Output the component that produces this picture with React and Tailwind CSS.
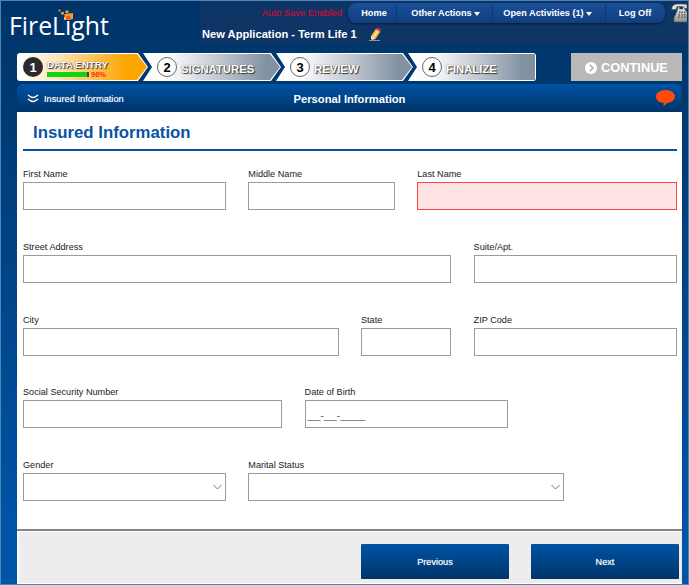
import React from "react";

const SPANS = {
  2: "col-span-2",
  3: "col-span-3",
  4: "col-span-4",
  5: "col-span-5",
  6: "col-span-6",
  8: "col-span-8",
};

const rows = [
  [
    { label: "First Name", span: 4 },
    { label: "Middle Name", span: 3 },
    { label: "Last Name", span: 5, error: true },
  ],
  [
    { label: "Street Address", span: 8 },
    { label: "Suite/Apt.", span: 4 },
  ],
  [
    { label: "City", span: 6 },
    { label: "State", span: 2 },
    { label: "ZIP Code", span: 4 },
  ],
  [
    { label: "Social Security Number", span: 5 },
    { label: "Date of Birth", span: 4, mask: "__-__-____" },
  ],
  [
    { label: "Gender", span: 4, select: true },
    { label: "Marital Status", span: 6, select: true },
  ],
];

function Field({ label, span, error, mask, select }) {
  return (
    <div className={SPANS[span]}>
      <div className="mb-px h-[13px] text-[9.15px] leading-[13px] whitespace-nowrap text-[#222]">{label}</div>
      <div
        className={
          "flex h-[28px] items-center border " +
          (error ? "border-[#ff4446] bg-[#ffe4e4]" : "border-[#9b9b9b] bg-white")
        }
      >
        {mask && <span className="pt-[2px] pl-[2px] text-[11.3px] leading-none text-[#666]">{mask}</span>}
        {select && (
          <svg className="mr-[3px] ml-auto" width="9" height="6" viewBox="0 0 9 6" fill="none" stroke="#777" strokeWidth="1">
            <path d="M.5 1l4 4 4-4" />
          </svg>
        )}
      </div>
    </div>
  );
}

const first = "[clip-path:polygon(0_0,calc(100%_-_10px)_0,100%_50%,calc(100%_-_10px)_100%,0_100%)]";
const middle = "[clip-path:polygon(0_0,calc(100%_-_10px)_0,100%_50%,calc(100%_-_10px)_100%,0_100%,9px_50%)]";
const last = "[clip-path:polygon(0_0,100%_0,100%_100%,0_100%,9px_50%)]";

function Step({ n, title, size, shape, fill, active, children }) {
  return (
    <div className={`${size} ${shape} h-[28px] shrink-0 bg-white p-px`}>
      <div className={`${shape} ${fill} flex h-full items-center`}>
        <span
          className={
            "flex size-[20px] shrink-0 items-center justify-center rounded-full text-[13px] leading-none font-bold " +
            (active ? "ml-[5px] bg-[#2b2b2b] text-white" : "ml-[13px] border border-[#666] bg-white text-black")
          }
        >
          {n}
        </span>
        <div className={active ? "ml-[4px] pt-[3px]" : "ml-[4px] pt-[5px]"}>
          <div
            className={
              "font-bold whitespace-nowrap text-white [text-shadow:1px_1px_1px_#333,0_0_1px_#555] " +
              (active ? "text-[9.8px] leading-[11px]" : "text-[11.3px] leading-[13px]")
            }
          >
            {title}
          </div>
          {children}
        </div>
      </div>
    </div>
  );
}

const silver = "bg-[linear-gradient(90deg,#fff_0%,#f8f9fa_20%,#c2c8d1_55%,#8291a2_90%,#8291a2_100%)]";

function Caret() {
  return (
    <svg className="ml-[2px] inline-block" width="6" height="4" viewBox="0 0 6 4">
      <path d="M0 0h6L3 4z" fill="#fff" />
    </svg>
  );
}

function NavItem({ size, children }) {
  return (
    <div className={`${size} flex shrink-0 items-center justify-center border-r border-[#0e3a75] whitespace-nowrap last:border-r-0`}>
      {children}
    </div>
  );
}

function Logo() {
  return (
    <div className="relative h-[44px] w-[183px] shrink-0">
      <div className="pt-[7px] pl-[8px] font-['Open_Sans',sans-serif] text-[24.8px] leading-[34px] font-normal text-white">
        FireLight
      </div>
      <svg className="absolute top-[8px] left-[56px]" width="18" height="13" viewBox="0 0 18 13">
        <path d="M7.500 5l8.500-1v6l-4 1H7.500z" fill="#f9992a" />
        <path d="M9 7.500l4-1 .5 3.500-4 1z" fill="#e8562a" />
        <path d="M7 8h2v3H7z" fill="#fbb65a" />
        <path d="M8.500 1.500h3v2.500h-3z" fill="#f6a53c" />
        <path d="M4 3h3v2.500H4z" fill="#e39a44" />
        <path d="M1.500 .5h2v2h-2z" fill="#cf9650" />
      </svg>
    </div>
  );
}

function Pencil() {
  return (
    <svg className="ml-[12px]" width="14" height="15" viewBox="0 0 14 15">
      <path d="M0 13.500h11" stroke="#8794a8" />
      <path d="M2 9l5-7.500 4.500 3-5 7.500-4.500 1z" fill="#f5b338" />
      <path d="M4.200 10.500L9 3.500" stroke="#ffe9a8" strokeWidth="1.500" />
      <path d="M7 2l1-1.500 4 1.500-1 3z" fill="#c8323b" />
      <path d="M2 9l4 3-4 1z" fill="#f4e3c1" />
      <path d="M1.500 11.500l1.500 1.200-1.500.3z" fill="#222" />
    </svg>
  );
}

function Phone() {
  return (
    <svg className="ml-[6px] shrink-0" width="16" height="20" viewBox="0 0 16 20">
      <defs>
        <linearGradient id="phone-body" x1="0" y1="0" x2="0" y2="1">
          <stop offset="0" stopColor="#eee" />
          <stop offset="1" stopColor="#8d8d8d" />
        </linearGradient>
      </defs>
      <path d="M1 6.500C0 3 3 1 8 1s8 .5 8 .5v4h-3l-1-2H6l-1 3z" fill="#e2e2e2" stroke="#555" strokeWidth=".6" />
      <path d="M7 4h1.500v2H12V4h1.500v2L16 9v10H3v-4l3.500-8z" fill="url(#phone-body)" stroke="#555" strokeWidth=".5" />
      <path d="M8 8.500h1.500V10H8zM10.500 8.500H12V10h-1.500zM13 8.500h1.500V10H13zM7.500 11H9v1.500H7.500zM10.500 11H12v1.500h-1.500zM13 11h1.500v1.500H13zM7 13.500h1.500V15H7zM10.500 13.500H12V15h-1.500zM13 13.500h1.500V15H13z" fill="#555" />
    </svg>
  );
}

export default function App() {
  return (
    <div className="flex h-[585px] w-[689px] flex-col overflow-hidden border border-[#4b86b8] bg-[linear-gradient(180deg,#003468_0px,#003a73_110px,#0055a9_550px)] font-['Liberation_Sans',Arial,sans-serif]">
      <header className="flex h-[43px] shrink-0">
        <Logo />
        <div className="ml-[16px] flex min-w-0 flex-1 flex-col bg-[#0e3566]">
          <div className="flex h-[23px] pt-[2px]">
            <div className="ml-[62px] w-[86px] shrink-0 text-[9.35px] leading-[21px] whitespace-nowrap text-[#e4002b]">
              Auto Save Enabled
            </div>
            <nav className="flex h-[20px] w-[317px] shrink-0 rounded-[8px] bg-[linear-gradient(180deg,#1a4f98,#103f80)] pt-px text-[9.2px] font-bold text-white shadow-[0_1px_2px_#0008]">
              <NavItem size="w-[49px] pl-[4px]">Home</NavItem>
              <NavItem size="w-[96px] pl-[2px]">Other Actions<Caret /></NavItem>
              <NavItem size="w-[113px] pr-[3px]">Open Activities (1)<Caret /></NavItem>
              <NavItem size="w-[59px] pr-[1px]">Log Off</NavItem>
            </nav>
            <Phone />
          </div>
          <div className="flex h-[20px] items-center pl-[2px] text-[11.15px] font-bold whitespace-nowrap text-white">
            <span>New Application - Term Life 1</span>
            <Pencil />
          </div>
        </div>
      </header>

      <div className="mt-[9px] mr-[6px] ml-[16px] flex h-[28px] shrink-0 justify-between">
        <div className="flex overflow-hidden rounded-[3px]">
          <Step n="1" title="DATA ENTRY" size="w-[131px]" shape={first} active fill="bg-[linear-gradient(90deg,#fff_0%,#fde5bd_30%,#fdb52f_70%,#fda500_85%)]">
            <div className="flex h-[9px] items-center">
              <div className="flex h-[5px] w-[42px] justify-end bg-[#12d312]">
                <div className="w-[2px] bg-[#444]" />
              </div>
              <span className="ml-[2px] text-[7.5px] leading-[9px] font-bold text-[#ff2a00]">96%</span>
            </div>
          </Step>
          <Step n="2" title="SIGNATURES" size="-ml-[5px] w-[138px]" shape={middle} fill={silver} />
          <Step n="3" title="REVIEW" size="-ml-[5px] w-[137px]" shape={middle} fill={silver} />
          <Step n="4" title="FINALIZE" size="-ml-[5px] w-[128px]" shape={last} fill={silver} />
        </div>
        <button className="flex w-[111px] items-center justify-center gap-[4px] bg-[#b9b9b9] pt-[1px] text-[12.8px] font-bold text-white">
          <svg width="12" height="12" viewBox="0 0 12 12">
            <circle cx="6" cy="6" r="6" fill="#fff" />
            <path d="M4.700 2.800L8 6 4.700 9.200" fill="none" stroke="#b0b0b0" strokeWidth="1.600" />
          </svg>
          CONTINUE
        </button>
      </div>

      <main className="mt-[3px] mr-[6px] ml-[16px] flex min-h-0 flex-1 flex-col">
        <div className="grid h-[28px] shrink-0 grid-cols-[1fr_auto_1fr] items-center rounded-t-[6px] bg-[linear-gradient(180deg,#0053a6,#003468)] text-white">
          <div className="flex items-center gap-[5px] pt-[4px] pl-[10px] text-[9.25px] [text-shadow:0_0_1px_#fff8]">
            <svg className="-mt-[3px]" width="12" height="9" viewBox="0 0 12 9" fill="none" stroke="#fff" strokeWidth="1.600">
              <path d="M1 1q3 2.500 5 2.500t5-2.500M1 5q3 2.500 5 2.500t5-2.500" />
            </svg>
            Insured Information
          </div>
          <h1 className="pt-[2px] text-[11.2px] font-bold">Personal Information</h1>
          <svg className="mr-[6px] ml-auto" width="21" height="18" viewBox="0 0 21 18">
            <path d="M10.500 1C16 1 20 4 20 7.500S16.500 13.500 12 14q-1 2-4 3 1-1.500.8-3C4 13.500 1 11 1 7.500S5 1 10.500 1z" fill="#ff4a0a" />
          </svg>
        </div>
        <section className="h-[417px] shrink-0 bg-white pr-[5.5px] pl-[6px]">
          <h2 className="h-[39px] border-b-2 border-[#0853a5] pl-[10px] text-[16.8px] leading-[41px] font-bold text-[#0853a5]">
            Insured Information
          </h2>
          <form className="flex flex-col gap-[30.8px] pt-[17px]">
            {rows.map((fields) => (
              <div key={fields[0].label} className="grid grid-cols-12 gap-x-[22.4px]">
                {fields.map((f) => (
                  <Field key={f.label} {...f} />
                ))}
              </div>
            ))}
          </form>
        </section>
        <footer className="flex min-h-0 flex-1 flex-col border-t-2 border-[#858585] bg-white pt-px pb-px pl-[2px] text-[9.15px] text-white">
          <div className="flex flex-1 justify-end gap-[22px] bg-[#ededed] pt-[12px] pr-[3px]">
            <button className="h-[35px] w-[148px] rounded-[1px] bg-[linear-gradient(180deg,#0053a6,#003468)] pt-[2px] [text-shadow:0_0_1px_#fffa]">Previous</button>
            <button className="h-[35px] w-[148px] rounded-[1px] bg-[linear-gradient(180deg,#0053a6,#003468)] pt-[2px] [text-shadow:0_0_1px_#fffa]">Next</button>
          </div>
        </footer>
      </main>
    </div>
  );
}
